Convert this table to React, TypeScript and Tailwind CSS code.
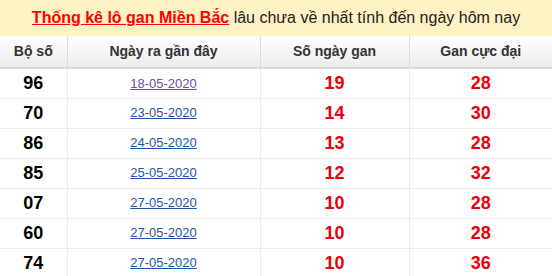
const rows = [
  { bo: "96", date: "18-05-2020", visited: true, ngay: 19, max: 28 },
  { bo: "70", date: "23-05-2020", ngay: 14, max: 30 },
  { bo: "86", date: "24-05-2020", ngay: 13, max: 28 },
  { bo: "85", date: "25-05-2020", ngay: 12, max: 32 },
  { bo: "07", date: "27-05-2020", ngay: 10, max: 28 },
  { bo: "60", date: "27-05-2020", ngay: 10, max: 28 },
  { bo: "74", date: "27-05-2020", ngay: 10, max: 36 },
];

export default function App() {
  return (
    <div className="w-[552px] h-[276px] overflow-hidden bg-white font-['Liberation_Sans',Arial,sans-serif]">
      <div className="h-[36px] bg-[#fff2c4] flex items-center justify-center text-[16px] text-[#222]">
        <a href="#" className="text-[#f00] font-bold underline">Thống kê lô gan Miền Bắc</a>
        <span>&nbsp;lâu chưa về nhất tính đến ngày hôm nay</span>
      </div>
      <table className="w-full border-collapse table-fixed">
        <colgroup>
          <col className="w-[67px]" />
          <col className="w-[193px]" />
          <col className="w-[149px]" />
          <col />
        </colgroup>
        <thead>
          <tr className="h-[32px] bg-gradient-to-b from-white to-[#ebebeb] text-[14px] font-bold text-[#333]">
            <th className="border-r border-b-2 border-[#dcdcdc]">Bộ số</th>
            <th className="border-r border-b-2 border-[#dcdcdc]">Ngày ra gần đây</th>
            <th className="border-r border-b-2 border-[#dcdcdc]">Số ngày gan</th>
            <th className="border-b-2 border-[#dcdcdc]">Gan cực đại</th>
          </tr>
        </thead>
        <tbody>
          {rows.map((r, i) => (
            <tr key={i} className="h-[30px] text-center">
              <td className="border-r border-b border-[#ececec] text-[18px] font-bold text-black">{r.bo}</td>
              <td className="border-r border-b border-[#ececec] text-[13px]">
                <a href="#" className={`underline ${r.visited ? "text-[#6c4fa0]" : "text-[#1f56a6]"}`}>{r.date}</a>
              </td>
              <td className="border-r border-b border-[#ececec] text-[18px] font-bold text-[#e8000b]">{r.ngay}</td>
              <td className="border-b border-[#ececec] text-[18px] font-bold text-[#e8000b]">{r.max}</td>
            </tr>
          ))}
        </tbody>
      </table>
    </div>
  );
}
